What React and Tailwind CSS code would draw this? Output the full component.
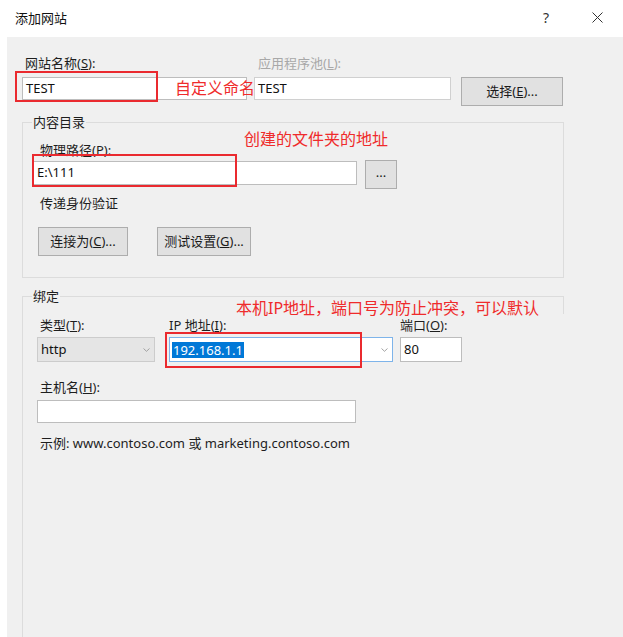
import React from 'react';

// --- Small building blocks ---

function Label({ children, className = '' }) {
  return <div className={`h-[16px] leading-[16px] text-[13px] whitespace-nowrap ${className}`}>{children}</div>;
}

function TextBox({ value, className = '' }) {
  return (
    <div className={`flex items-center border border-[#bdbdbd] bg-white pl-[3px] text-[13px] text-[#111] ${className}`}>
      {value}
    </div>
  );
}

function Button({ children, className = '' }) {
  return (
    <div className={`flex items-center justify-center border border-[#adadad] bg-[#e1e1e1] text-[13px] text-[#1a1a1a] ${className}`}>
      {children}
    </div>
  );
}

function Chevron() {
  return (
    <svg width="7" height="4" viewBox="0 0 7 4" className="shrink-0">
      <path d="M0.5 0.5 L3.5 3.3 L6.5 0.5" fill="none" stroke="#9a9a9a" strokeWidth="0.9" />
    </svg>
  );
}

function GroupBox({ title, className = '', children }) {
  return (
    <div className={`relative w-[542px] border-[#dcdcdc] ${className}`}>
      <div className="absolute left-[9px] -top-[9px] bg-[#f0f0f0] px-[1px] text-[13px] leading-[16px] text-[#1e1e1e]">
        {title}
      </div>
      {children}
    </div>
  );
}

function Note({ children, className = '' }) {
  return (
    <div className={`absolute text-[16px] leading-[16px] text-[#ef2b2b] whitespace-nowrap ${className}`}>{children}</div>
  );
}

// --- Dialog ---

export default function App() {
  return (
    <div className="relative flex h-[637px] w-[623px] flex-col overflow-hidden bg-white font-['Noto_Sans','Noto_Sans_CJK_SC',sans-serif] text-[#1e1e1e]">
      {/* title bar */}
      <div className="flex h-[37px] shrink-0 items-center pb-[2px]">
        <div className="pl-[15px] text-[13px] leading-[16px] text-[#111]">添加网站</div>
        <div className="ml-auto w-[10px] text-[14px] leading-[16px] text-[#333]">?</div>
        <svg width="11" height="11" viewBox="0 0 11 11" className="ml-[39px] mr-[20px]">
          <path d="M0.5 0.5 L10.5 10.5 M10.5 0.5 L0.5 10.5" stroke="#333" strokeWidth="1" />
        </svg>
      </div>

      {/* body */}
      <div className="ml-[7px] flex flex-1 flex-col bg-[#f0f0f0] pl-[15px] pt-[18px]">
        {/* site name / app pool */}
        <div className="flex items-start">
          <div className="w-[225px]">
            <Label className="mb-[6px] pl-[3px]">网站名称(<span className="underline">S</span>):</Label>
            <TextBox value="TEST" className="h-[23px]" />
          </div>
          <div className="ml-[7px] w-[197px]">
            <Label className="mb-[6px] pl-[4px] text-[#a8a8a8]">应用程序池(<span className="underline">L</span>):</Label>
            <TextBox value="TEST" className="h-[23px] border-[#d0d0d0] bg-[#f3f3f3]" />
          </div>
          <div className="ml-[10px] pt-[22px]">
            <Button className="h-[29px] w-[102px]">选择(<span className="underline">E</span>)...</Button>
          </div>
        </div>

        {/* content directory */}
        <GroupBox title="内容目录" className="mt-[16px] border pl-[10px] pt-[19px] pb-[21px]">
          <Label className="mb-[2px] pl-[7px]">物理路径(P):</Label>
          <div className="flex items-start">
            <TextBox value="E:\111" className="mt-[1px] h-[24px] w-[324px]" />
            <Button className="ml-[8px] h-[29px] w-[32px] pb-[3px] text-[11px]">...</Button>
          </div>
          <Label className="mt-[6px] pl-[7px]">传递身份验证</Label>
          <div className="mt-[16px] flex">
            <Button className="ml-[5px] h-[29px] w-[90px]">连接为(<span className="underline">C</span>)...</Button>
            <Button className="ml-[29px] h-[29px] w-[94px]">测试设置(<span className="underline">G</span>)...</Button>
          </div>
        </GroupBox>

        {/* binding */}
        <GroupBox title="绑定" className="mt-[18px] flex-1 border-l border-t pl-[14px] pt-[20px]">
          <div className="absolute right-0 top-0 h-[17px] w-px bg-[#dcdcdc]" />
          <div className="flex items-start">
            <div className="w-[118px]">
              <Label className="mb-[4px] pl-[3px]">类型(<span className="underline">T</span>):</Label>
              <div className="flex h-[25px] items-center border border-[#cccccc] bg-[#e5e5e5] pl-[3px] pr-[4px] text-[13px] text-[#111]">
                http
                <span className="ml-auto"><Chevron /></span>
              </div>
            </div>
            <div className="ml-[14px] w-[224px]">
              <Label className="mb-[4px]">IP 地址(<span className="underline">I</span>):</Label>
              <div className="flex h-[25px] items-center border border-[#7eb4ea] bg-white pl-[2px] pr-[4px] text-[13px]">
                <span className="bg-[#0078d7] px-px leading-[16px] text-white">192.168.1.1</span>
                <span className="ml-auto"><Chevron /></span>
              </div>
            </div>
            <div className="ml-[7px] w-[62px]">
              <Label className="mb-[4px]">端口(<span className="underline">O</span>):</Label>
              <TextBox value="80" className="h-[25px]" />
            </div>
          </div>
          <Label className="mt-[17px] pl-[3px]">主机名(<span className="underline">H</span>):</Label>
          <TextBox value="" className="mt-[5px] h-[23px] w-[319px]" />
          <Label className="mt-[12px] pl-[3px]">示例: www.contoso.com 或 marketing.contoso.com</Label>
        </GroupBox>
      </div>

      {/* red annotations drawn over the dialog */}
      <div className="absolute left-[15px] top-[71px] h-[31px] w-[143px] border-2 border-[#ea2a2f]" />
      <Note className="left-[175px] top-[80px]">自定义命名</Note>
      <div className="absolute left-[32px] top-[154px] h-[33px] w-[205px] border-2 border-[#ea2a2f]" />
      <Note className="left-[244px] top-[131px]">创建的文件夹的地址</Note>
      <div className="absolute left-[165px] top-[332px] h-[36px] w-[197px] border-2 border-[#ea2a2f]" />
      <Note className="left-[236px] top-[300px]">本机IP地址，端口号为防止冲突，可以默认</Note>
    </div>
  );
}
